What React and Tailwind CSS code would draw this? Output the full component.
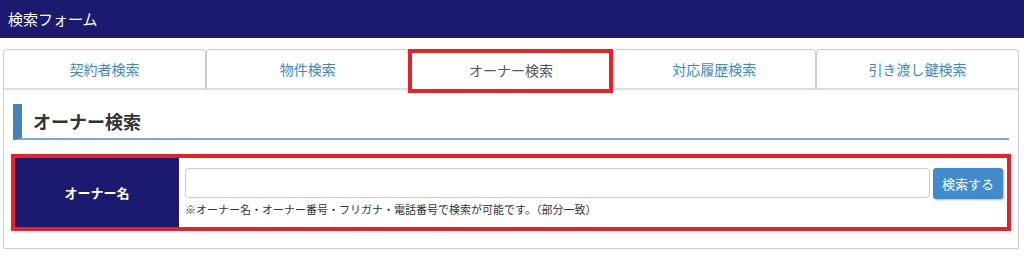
const tabs = ["契約者検索", "物件検索", "オーナー検索", "対応履歴検索", "引き渡し鍵検索"]

const App = () => {
  const active = 2

  return (
    <div className="w-[1024px] h-[256px] bg-white overflow-hidden font-['Meiryo','Noto_Sans_CJK_JP',sans-serif]">
      <div className="h-[38px] bg-[#1b1a6e] flex items-center px-[8px] text-white text-[15px]">
        検索フォーム
      </div>

      <div className="mx-[3px] mt-[11px] w-[1016px]">
        <div className="flex">
          {tabs.map((t, i) => (
            <div
              key={t}
              className={
                i === active
                  ? "relative flex-1 h-[41px] flex items-center justify-center text-[14px] text-[#555] border border-b-0 border-[#ccc] rounded-t-[4px] bg-white"
                  : "flex-1 h-[41px] flex items-center justify-center text-[14px] text-[#3d87c9] border border-[#ccc] border-b-[#ddd] border-b-2 rounded-t-[4px] bg-white"
              }
            >
              {t}
              {i === active && (
                <div className="absolute -left-[2px] -right-[1px] -top-[1px] -bottom-[3px] border-[4px] border-[#e8202a]" />
              )}
            </div>
          ))}
        </div>

        <div className="border-x border-b border-[#ccc] px-[9px] pt-[14px] pb-[17px]">
          <div className="h-[36px] border-l-[9px] border-[#4682b4] border-b-2 border-b-[#7fa8d4] flex items-center pl-[11px] text-[18px] font-bold text-[#333]">
            オーナー検索
          </div>

          <div className="mt-[14px] -mx-[2px] h-[77px] border-[4px] border-[#e8202a] flex">
            <div className="w-[164px] bg-[#1b1a6e] flex items-center justify-center text-white text-[13px] font-bold">
              オーナー名
            </div>
            <div className="flex-1 pl-[6px] pr-[4px] pt-[10px]">
              <div className="flex items-stretch gap-[3px]">
                <div className="flex-1 h-[30px] border border-[#ccc] rounded-[4px] bg-white" />
                <button className="w-[70px] h-[31px] bg-[#428bca] text-white text-[13px] rounded-[3px] shadow-[1px_1px_2px_rgba(0,0,0,0.3)]">
                  検索する
                </button>
              </div>
              <div className="mt-[2px] text-[11px] text-[#333]">
                ※オーナー名・オーナー番号・フリガナ・電話番号で検索が可能です。（部分一致）
              </div>
            </div>
          </div>
        </div>
      </div>
    </div>
  )
}

export default App
